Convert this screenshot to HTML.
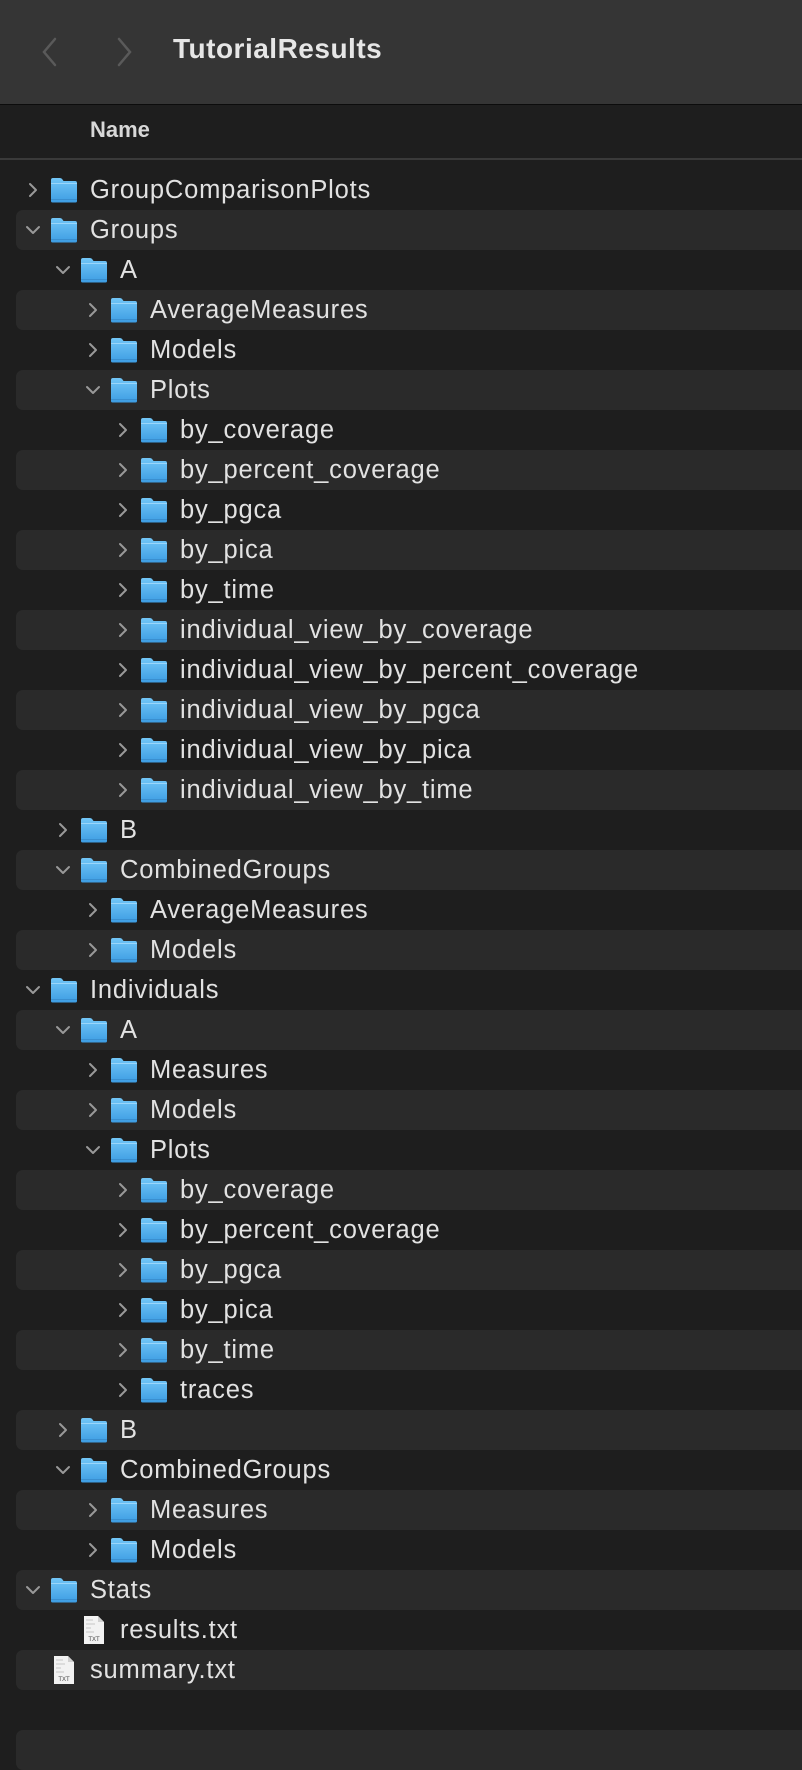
<!DOCTYPE html>
<html><head><meta charset="utf-8"><style>
body{margin:0;width:802px;height:1746px;background:#1e1e1e;overflow:hidden;font-family:"Liberation Sans",sans-serif;position:relative}
.top{position:absolute;left:0;top:0;width:802px;height:104px;background:#353535;border-bottom:1px solid #0c0c0c}
.title{position:absolute;left:173px;top:33px;font-size:28px;letter-spacing:0.5px;font-weight:bold;color:#e6e6e6}
.nav{position:absolute;top:36px}
.colh{position:absolute;left:90px;top:117px;font-size:22px;font-weight:bold;color:#d8d8d8}
.sep{position:absolute;left:0;top:158px;width:802px;height:2px;background:#3a3a3a}
.rows{position:absolute;left:0;top:170px;width:802px}
.r{position:relative;height:40px}
.r.s::before{content:"";position:absolute;left:16px;right:-10px;top:0;bottom:0;background:#2a2a2a;border-radius:7px}
.r svg,.r span{position:absolute}
.r span{top:6px;font-size:25.5px;letter-spacing:0.8px;color:#e2e2e2;white-space:nowrap}
.ch{top:12px}
.fo{top:7px}
.fi{top:5px}
</style></head><body>
<div class="top">
<svg class="nav" style="left:40px" width="20" height="32" viewBox="0 0 20 32"><path d="M15 3 L4 16 L15 29" fill="none" stroke="#5a5a5a" stroke-width="2.5" stroke-linecap="round"/></svg>
<svg class="nav" style="left:114px" width="20" height="32" viewBox="0 0 20 32"><path d="M5 3 L16 16 L5 29" fill="none" stroke="#5a5a5a" stroke-width="2.5" stroke-linecap="round"/></svg>
<div class="title">TutorialResults</div>
</div>
<div class="colh">Name</div>
<div class="sep"></div>
<svg width="0" height="0" style="position:absolute"><defs>
<linearGradient id="g" x1="0" y1="0" x2="0" y2="1"><stop offset="0" stop-color="#72c6f7"/><stop offset="1" stop-color="#3d9de3"/></linearGradient>
<symbol id="f" viewBox="0 0 28 26"><path d="M1 3 Q1 1 3 1 L10 1 Q11.5 1 12.5 2.5 L13.5 4 L25 4 Q27 4 27 6 L27 24 Q27 25.5 25.5 25.5 L2.5 25.5 Q1 25.5 1 24 Z" fill="url(#g)"/><rect x="1" y="6" width="26" height="1" fill="#9ad6fb"/><rect x="1" y="22" width="26" height="1" fill="#3a8fd0"/></symbol>
<symbol id="c" viewBox="0 0 16 16"><path d="M5 2 L11 8 L5 14" fill="none" stroke="#999" stroke-width="2" stroke-linecap="round" stroke-linejoin="round"/></symbol>
<symbol id="e" viewBox="0 0 16 16"><path d="M2 5 L8 11 L14 5" fill="none" stroke="#999" stroke-width="2" stroke-linecap="round" stroke-linejoin="round"/></symbol>
<symbol id="t" viewBox="0 0 22 30"><path d="M1 1 L15 1 L21 7 L21 29 L1 29 Z" fill="#f2f2f2"/><path d="M15 1 L15 7 L21 7" fill="#d0d0d0"/><g stroke="#bbb" stroke-width="0.8"><line x1="3" y1="5" x2="10" y2="5"/><line x1="3" y1="9" x2="12" y2="9"/><line x1="3" y1="13" x2="8" y2="13"/><line x1="3" y1="17" x2="11" y2="17"/></g><text x="11" y="26" font-size="6" text-anchor="middle" fill="#444" font-family="Liberation Sans">TXT</text></symbol>
</defs></svg>
<div class="rows">
<div class="r"><svg class="ch" style="left:25px" width="16" height="16"><use href="#c"/></svg><svg class="fo" style="left:50px" width="28" height="26"><use href="#f"/></svg><span style="left:90px">GroupComparisonPlots</span></div>
<div class="r s"><svg class="ch" style="left:25px" width="16" height="16"><use href="#e"/></svg><svg class="fo" style="left:50px" width="28" height="26"><use href="#f"/></svg><span style="left:90px">Groups</span></div>
<div class="r"><svg class="ch" style="left:55px" width="16" height="16"><use href="#e"/></svg><svg class="fo" style="left:80px" width="28" height="26"><use href="#f"/></svg><span style="left:120px">A</span></div>
<div class="r s"><svg class="ch" style="left:85px" width="16" height="16"><use href="#c"/></svg><svg class="fo" style="left:110px" width="28" height="26"><use href="#f"/></svg><span style="left:150px">AverageMeasures</span></div>
<div class="r"><svg class="ch" style="left:85px" width="16" height="16"><use href="#c"/></svg><svg class="fo" style="left:110px" width="28" height="26"><use href="#f"/></svg><span style="left:150px">Models</span></div>
<div class="r s"><svg class="ch" style="left:85px" width="16" height="16"><use href="#e"/></svg><svg class="fo" style="left:110px" width="28" height="26"><use href="#f"/></svg><span style="left:150px">Plots</span></div>
<div class="r"><svg class="ch" style="left:115px" width="16" height="16"><use href="#c"/></svg><svg class="fo" style="left:140px" width="28" height="26"><use href="#f"/></svg><span style="left:180px">by_coverage</span></div>
<div class="r s"><svg class="ch" style="left:115px" width="16" height="16"><use href="#c"/></svg><svg class="fo" style="left:140px" width="28" height="26"><use href="#f"/></svg><span style="left:180px">by_percent_coverage</span></div>
<div class="r"><svg class="ch" style="left:115px" width="16" height="16"><use href="#c"/></svg><svg class="fo" style="left:140px" width="28" height="26"><use href="#f"/></svg><span style="left:180px">by_pgca</span></div>
<div class="r s"><svg class="ch" style="left:115px" width="16" height="16"><use href="#c"/></svg><svg class="fo" style="left:140px" width="28" height="26"><use href="#f"/></svg><span style="left:180px">by_pica</span></div>
<div class="r"><svg class="ch" style="left:115px" width="16" height="16"><use href="#c"/></svg><svg class="fo" style="left:140px" width="28" height="26"><use href="#f"/></svg><span style="left:180px">by_time</span></div>
<div class="r s"><svg class="ch" style="left:115px" width="16" height="16"><use href="#c"/></svg><svg class="fo" style="left:140px" width="28" height="26"><use href="#f"/></svg><span style="left:180px">individual_view_by_coverage</span></div>
<div class="r"><svg class="ch" style="left:115px" width="16" height="16"><use href="#c"/></svg><svg class="fo" style="left:140px" width="28" height="26"><use href="#f"/></svg><span style="left:180px">individual_view_by_percent_coverage</span></div>
<div class="r s"><svg class="ch" style="left:115px" width="16" height="16"><use href="#c"/></svg><svg class="fo" style="left:140px" width="28" height="26"><use href="#f"/></svg><span style="left:180px">individual_view_by_pgca</span></div>
<div class="r"><svg class="ch" style="left:115px" width="16" height="16"><use href="#c"/></svg><svg class="fo" style="left:140px" width="28" height="26"><use href="#f"/></svg><span style="left:180px">individual_view_by_pica</span></div>
<div class="r s"><svg class="ch" style="left:115px" width="16" height="16"><use href="#c"/></svg><svg class="fo" style="left:140px" width="28" height="26"><use href="#f"/></svg><span style="left:180px">individual_view_by_time</span></div>
<div class="r"><svg class="ch" style="left:55px" width="16" height="16"><use href="#c"/></svg><svg class="fo" style="left:80px" width="28" height="26"><use href="#f"/></svg><span style="left:120px">B</span></div>
<div class="r s"><svg class="ch" style="left:55px" width="16" height="16"><use href="#e"/></svg><svg class="fo" style="left:80px" width="28" height="26"><use href="#f"/></svg><span style="left:120px">CombinedGroups</span></div>
<div class="r"><svg class="ch" style="left:85px" width="16" height="16"><use href="#c"/></svg><svg class="fo" style="left:110px" width="28" height="26"><use href="#f"/></svg><span style="left:150px">AverageMeasures</span></div>
<div class="r s"><svg class="ch" style="left:85px" width="16" height="16"><use href="#c"/></svg><svg class="fo" style="left:110px" width="28" height="26"><use href="#f"/></svg><span style="left:150px">Models</span></div>
<div class="r"><svg class="ch" style="left:25px" width="16" height="16"><use href="#e"/></svg><svg class="fo" style="left:50px" width="28" height="26"><use href="#f"/></svg><span style="left:90px">Individuals</span></div>
<div class="r s"><svg class="ch" style="left:55px" width="16" height="16"><use href="#e"/></svg><svg class="fo" style="left:80px" width="28" height="26"><use href="#f"/></svg><span style="left:120px">A</span></div>
<div class="r"><svg class="ch" style="left:85px" width="16" height="16"><use href="#c"/></svg><svg class="fo" style="left:110px" width="28" height="26"><use href="#f"/></svg><span style="left:150px">Measures</span></div>
<div class="r s"><svg class="ch" style="left:85px" width="16" height="16"><use href="#c"/></svg><svg class="fo" style="left:110px" width="28" height="26"><use href="#f"/></svg><span style="left:150px">Models</span></div>
<div class="r"><svg class="ch" style="left:85px" width="16" height="16"><use href="#e"/></svg><svg class="fo" style="left:110px" width="28" height="26"><use href="#f"/></svg><span style="left:150px">Plots</span></div>
<div class="r s"><svg class="ch" style="left:115px" width="16" height="16"><use href="#c"/></svg><svg class="fo" style="left:140px" width="28" height="26"><use href="#f"/></svg><span style="left:180px">by_coverage</span></div>
<div class="r"><svg class="ch" style="left:115px" width="16" height="16"><use href="#c"/></svg><svg class="fo" style="left:140px" width="28" height="26"><use href="#f"/></svg><span style="left:180px">by_percent_coverage</span></div>
<div class="r s"><svg class="ch" style="left:115px" width="16" height="16"><use href="#c"/></svg><svg class="fo" style="left:140px" width="28" height="26"><use href="#f"/></svg><span style="left:180px">by_pgca</span></div>
<div class="r"><svg class="ch" style="left:115px" width="16" height="16"><use href="#c"/></svg><svg class="fo" style="left:140px" width="28" height="26"><use href="#f"/></svg><span style="left:180px">by_pica</span></div>
<div class="r s"><svg class="ch" style="left:115px" width="16" height="16"><use href="#c"/></svg><svg class="fo" style="left:140px" width="28" height="26"><use href="#f"/></svg><span style="left:180px">by_time</span></div>
<div class="r"><svg class="ch" style="left:115px" width="16" height="16"><use href="#c"/></svg><svg class="fo" style="left:140px" width="28" height="26"><use href="#f"/></svg><span style="left:180px">traces</span></div>
<div class="r s"><svg class="ch" style="left:55px" width="16" height="16"><use href="#c"/></svg><svg class="fo" style="left:80px" width="28" height="26"><use href="#f"/></svg><span style="left:120px">B</span></div>
<div class="r"><svg class="ch" style="left:55px" width="16" height="16"><use href="#e"/></svg><svg class="fo" style="left:80px" width="28" height="26"><use href="#f"/></svg><span style="left:120px">CombinedGroups</span></div>
<div class="r s"><svg class="ch" style="left:85px" width="16" height="16"><use href="#c"/></svg><svg class="fo" style="left:110px" width="28" height="26"><use href="#f"/></svg><span style="left:150px">Measures</span></div>
<div class="r"><svg class="ch" style="left:85px" width="16" height="16"><use href="#c"/></svg><svg class="fo" style="left:110px" width="28" height="26"><use href="#f"/></svg><span style="left:150px">Models</span></div>
<div class="r s"><svg class="ch" style="left:25px" width="16" height="16"><use href="#e"/></svg><svg class="fo" style="left:50px" width="28" height="26"><use href="#f"/></svg><span style="left:90px">Stats</span></div>
<div class="r"><svg class="fi" style="left:83px" width="22" height="30"><use href="#t"/></svg><span style="left:120px">results.txt</span></div>
<div class="r s"><svg class="fi" style="left:53px" width="22" height="30"><use href="#t"/></svg><span style="left:90px">summary.txt</span></div>
<div class="r"></div>
<div class="r s"></div>
</div>
</body></html>
